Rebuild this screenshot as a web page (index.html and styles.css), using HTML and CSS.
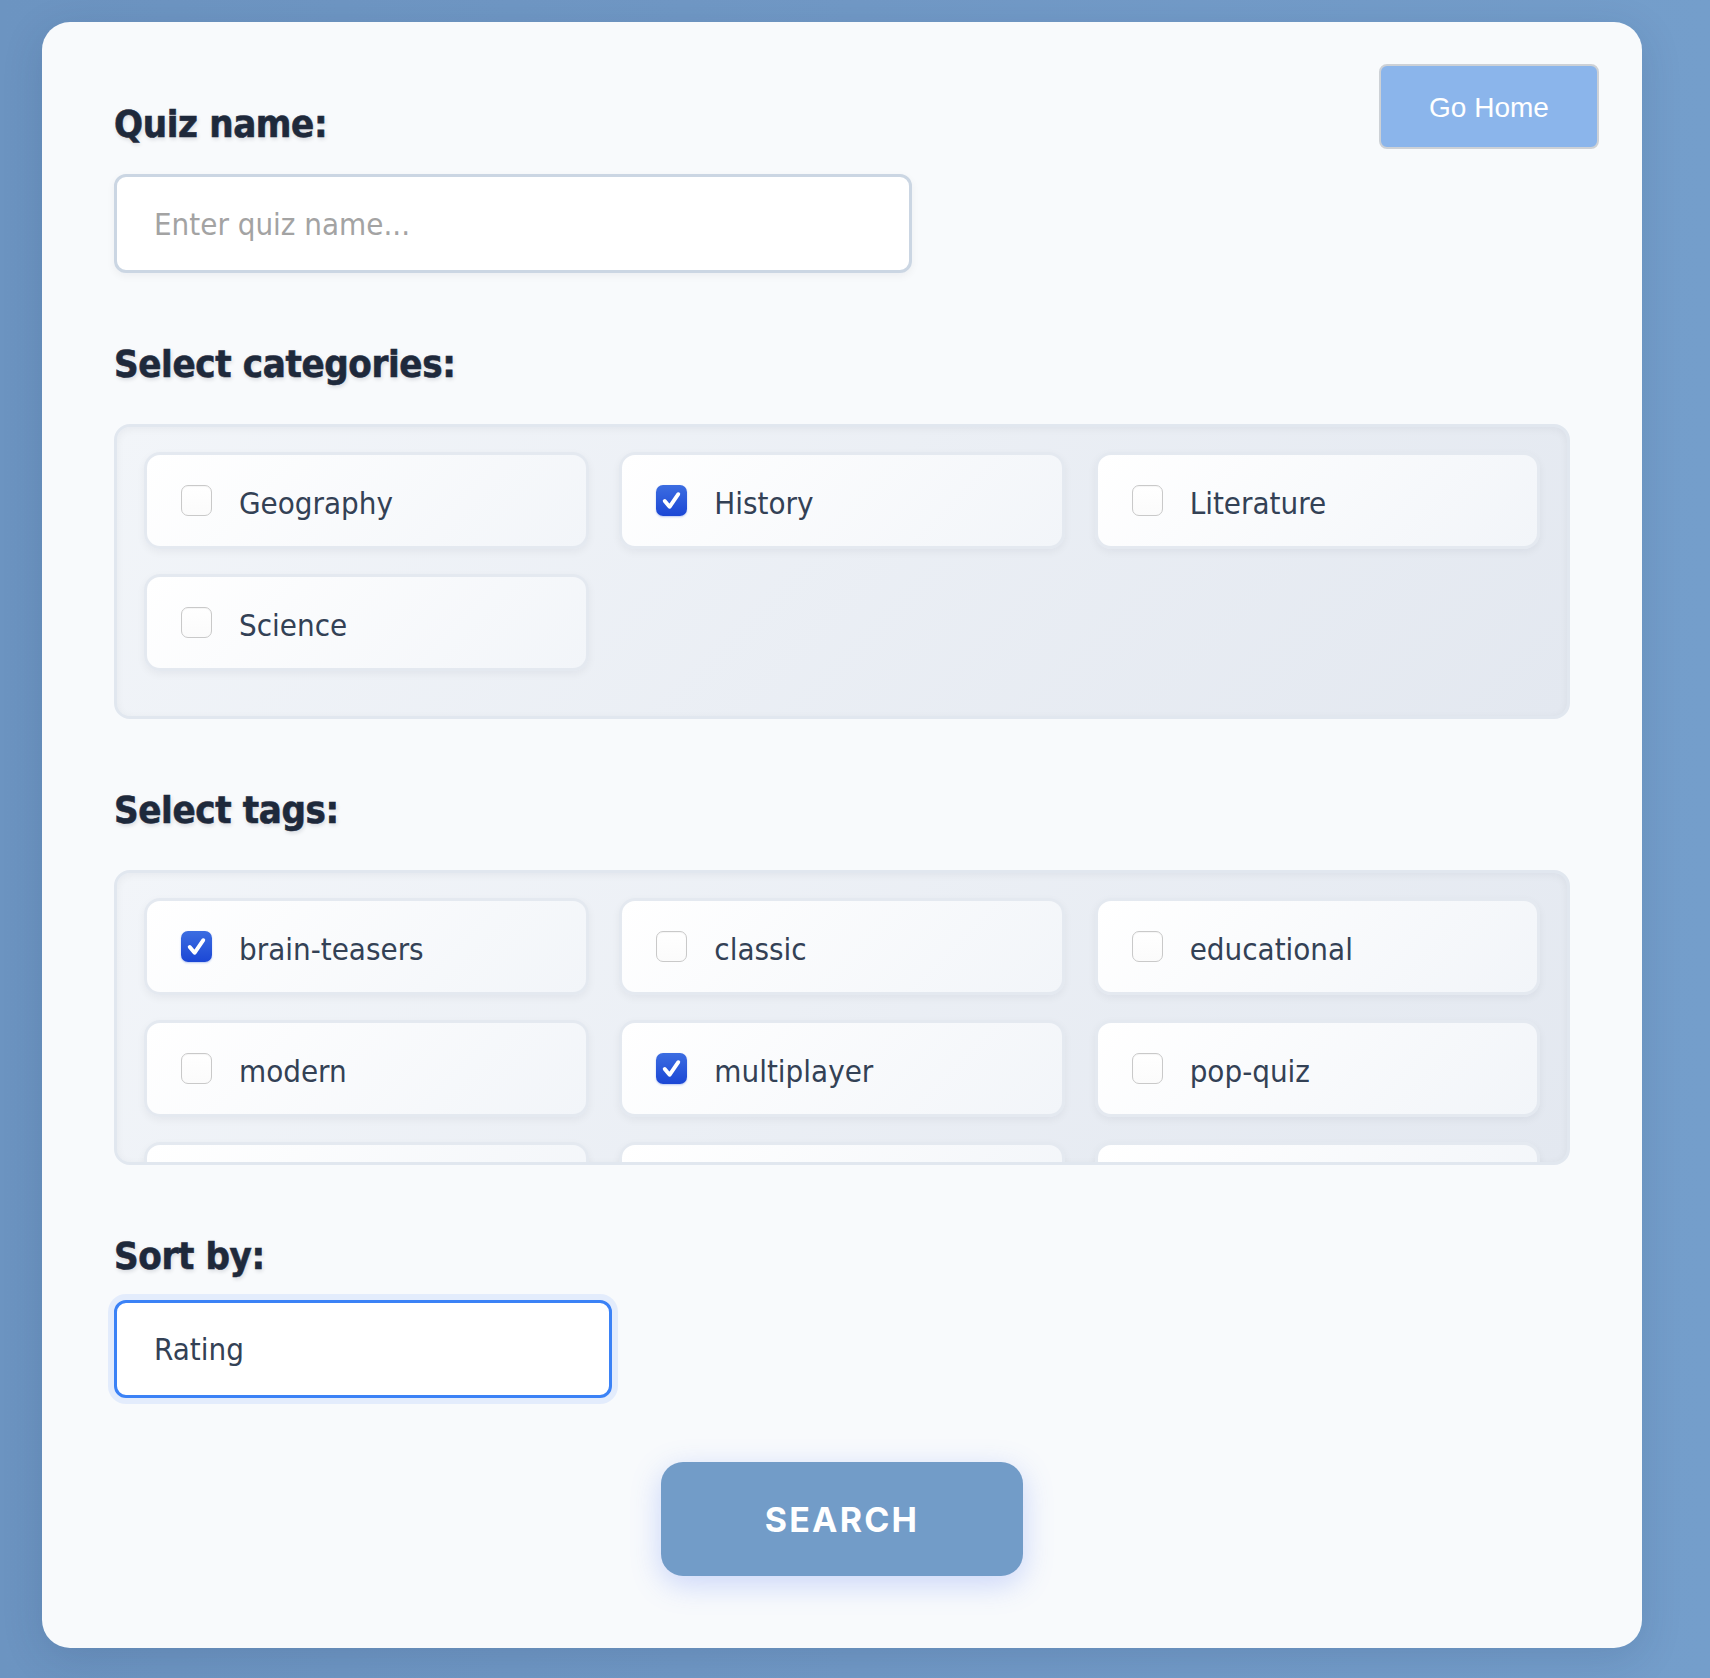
FILE: index.html
```html
<!DOCTYPE html>
<html lang="en">
<head>
<meta charset="utf-8">
<title>Quiz search</title>
<link rel="stylesheet" href="styles.css">
</head>
<body>
<div class="page">
  <main class="card">
    <button class="home-btn" type="button">Go Home</button>

    <h2 class="label label-first">Quiz name:</h2>
    <input class="text-input" type="text" placeholder="Enter quiz name...">

    <h2 class="label">Select categories:</h2>
    <div class="choice-box">
      <label class="choice"><span class="check"></span><span class="choice-text">Geography</span></label>
      <label class="choice"><span class="check checked"><svg viewBox="0 0 32 32" width="32" height="32"><path d="M9 16.5l5 6 9-13" fill="none" stroke="#fff" stroke-width="4" stroke-linecap="round" stroke-linejoin="round"/></svg></span><span class="choice-text">History</span></label>
      <label class="choice"><span class="check"></span><span class="choice-text">Literature</span></label>
      <label class="choice"><span class="check"></span><span class="choice-text">Science</span></label>
    </div>

    <h2 class="label">Select tags:</h2>
    <div class="choice-box">
      <label class="choice"><span class="check checked"><svg viewBox="0 0 32 32" width="32" height="32"><path d="M9 16.5l5 6 9-13" fill="none" stroke="#fff" stroke-width="4" stroke-linecap="round" stroke-linejoin="round"/></svg></span><span class="choice-text">brain-teasers</span></label>
      <label class="choice"><span class="check"></span><span class="choice-text">classic</span></label>
      <label class="choice"><span class="check"></span><span class="choice-text">educational</span></label>
      <label class="choice"><span class="check"></span><span class="choice-text">modern</span></label>
      <label class="choice"><span class="check checked"><svg viewBox="0 0 32 32" width="32" height="32"><path d="M9 16.5l5 6 9-13" fill="none" stroke="#fff" stroke-width="4" stroke-linecap="round" stroke-linejoin="round"/></svg></span><span class="choice-text">multiplayer</span></label>
      <label class="choice"><span class="check"></span><span class="choice-text">pop-quiz</span></label>
      <label class="choice"><span class="check"></span><span class="choice-text">quick-fire</span></label>
      <label class="choice"><span class="check"></span><span class="choice-text">trivia</span></label>
      <label class="choice"><span class="check"></span><span class="choice-text">world</span></label>
    </div>

    <h2 class="label label-sort">Sort by:</h2>
    <select class="sort-select">
      <option>Rating</option>
      <option>Newest</option>
      <option>Name</option>
    </select>

    <div class="actions">
      <button class="search-btn" type="button">SEARCH</button>
    </div>
  </main>
</div>
</body>
</html>
```

FILE: styles.css
```css
* { box-sizing: border-box; }

html, body {
  margin: 0;
  padding: 0;
}

body {
  background: linear-gradient(90deg, #6c94c1 0%, #7199c6 50%, #749ecb 100%);
  font-family: "DejaVu Sans Condensed", "DejaVu Sans", sans-serif;
  min-height: 1678px;
}

.page {
  padding: 22px 68px 30px 42px;
}

.card {
  position: relative;
  background: #f8fafc;
  border-radius: 28px;
  padding: 79px 72px 72px;
  display: flex;
  flex-direction: column;
  align-items: flex-start;
  box-shadow: 0 10px 40px rgba(30, 50, 90, 0.15);
}

.home-btn {
  position: absolute;
  top: 42px;
  right: 43px;
  width: 220px;
  height: 85px;
  padding: 3px 0 0;
  background: #8bb5eb;
  border: 2px solid #cdd1d6;
  border-radius: 8px;
  color: #ffffff;
  font-family: "Liberation Sans", Arial, sans-serif;
  font-size: 28px;
  cursor: pointer;
}

.label {
  margin: 68px 0 37px;
  font-size: 38px;
  line-height: 46px;
  font-weight: bold;
  letter-spacing: -0.35px;
  color: #1e293b;
  -webkit-text-stroke: 0.6px #1e293b;
  text-shadow: 1px 2px 4px rgba(15, 23, 42, 0.15);
}

.label-first {
  margin-top: 0;
  margin-bottom: 27px;
}

.label-sort {
  margin-bottom: 21px;
}

.text-input {
  width: 798px;
  height: 99px;
  border: 3px solid #cbd6e3;
  border-radius: 12px;
  background: #ffffff;
  padding: 0 37px;
  font-family: inherit;
  font-size: 31px;
  color: #334155;
  box-shadow: 0 3px 8px rgba(15, 23, 42, 0.05);
  outline: none;
}

.text-input::placeholder {
  color: #a3a3a3;
}

.choice-box {
  width: 100%;
  height: 295px;
  overflow: hidden;
  border: 3px solid #e1e7ef;
  border-radius: 16px;
  background: linear-gradient(135deg, #f2f5f9 0%, #e3e8f0 100%);
  box-shadow: inset 0 2px 8px rgba(15, 23, 42, 0.05);
  padding: 25px 27px;
  display: grid;
  grid-template-columns: repeat(3, 1fr);
  grid-auto-rows: 97px;
  gap: 25px 30px;
  align-content: start;
}

.choice {
  display: flex;
  align-items: center;
  gap: 27px;
  padding: 0 0 0 34px;
  border: 3px solid #e4e9f0;
  border-radius: 16px;
  background: linear-gradient(135deg, #ffffff 0%, #f2f5f9 100%);
  box-shadow: 0 3px 8px rgba(15, 23, 42, 0.05);
  cursor: pointer;
}

.check {
  flex: none;
  width: 31px;
  height: 31px;
  margin-top: -1px;
  border-radius: 7px;
  border: 1px solid #c9c9c9;
  background: linear-gradient(180deg, #ffffff 0%, #fbfbfb 100%);
  box-shadow: inset 0 1px 1px rgba(0, 0, 0, 0.04);
  display: flex;
  align-items: center;
  justify-content: center;
}

.check.checked {
  border: none;
  background: linear-gradient(180deg, #3c6de1 0%, #1b47d5 100%);
  box-shadow: 0 1px 2px rgba(29, 78, 216, 0.3);
}

.check svg {
  display: block;
  width: 31px;
  height: 31px;
}

.choice-text {
  padding-top: 5px;
  font-size: 31px;
  color: #334155;
  line-height: 1;
}

.sort-select {
  -webkit-appearance: none;
  appearance: none;
  width: 498px;
  height: 98px;
  border: 3px solid #3b82f6;
  border-radius: 12px;
  background: #ffffff;
  padding: 0 37px;
  font-family: inherit;
  font-size: 31px;
  color: #334155;
  box-shadow: 0 0 0 6px #e3ecfc;
  outline: none;
}

.actions {
  width: 100%;
  display: flex;
  justify-content: center;
  margin-top: 64px;
}

.search-btn {
  width: 362px;
  height: 114px;
  border: none;
  border-radius: 22px;
  background: #729cc8;
  color: #ffffff;
  font-family: Inter, "Liberation Sans", sans-serif;
  font-weight: 700;
  font-size: 34px;
  letter-spacing: 2.2px;
  box-shadow: 0 8px 30px rgba(79, 120, 246, 0.28);
  cursor: pointer;
}
```
